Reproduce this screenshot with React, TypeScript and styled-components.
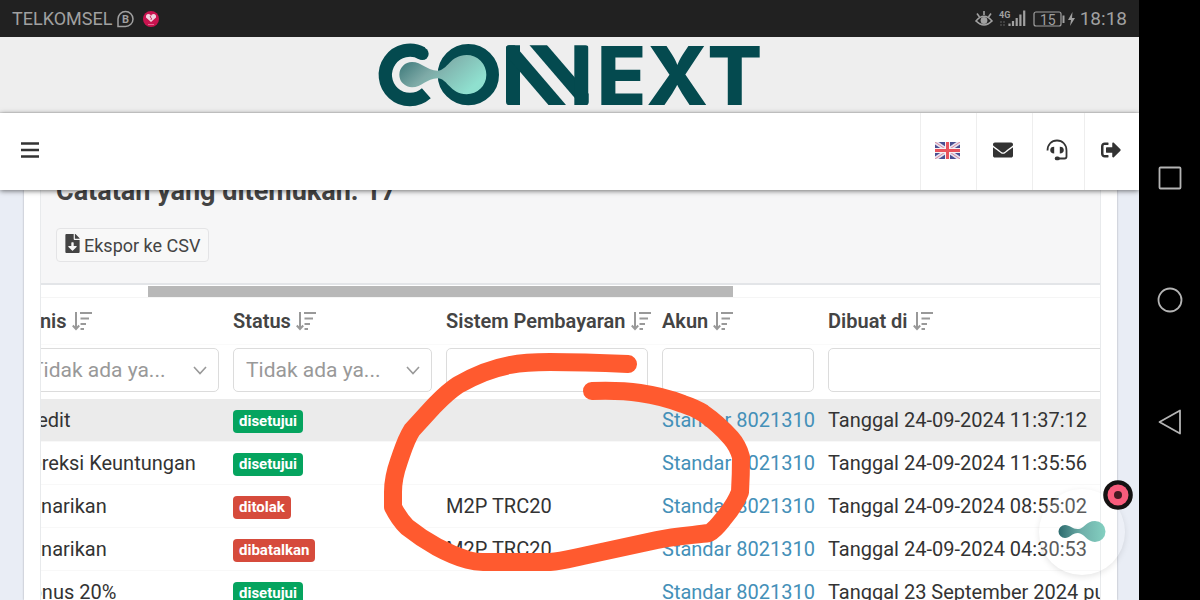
import React from "react";
import styled, { createGlobalStyle } from "styled-components";
import { FaSignOutAlt, FaFileDownload, FaEnvelope } from "react-icons/fa";

const GlobalStyle = createGlobalStyle`
  * { box-sizing: border-box; }
  body { margin: 0; background: #000; font-family: Roboto, "Liberation Sans", sans-serif; color: #333; }
  button, input, select { font-family: inherit; }
`;

const Device = styled.div`
  position: relative;
  display: flex;
  height: 100vh;
  overflow: hidden;
`;

const Screen = styled.div`
  flex: 1;
  min-width: 0;
  display: flex;
  flex-direction: column;
  background: #e9edf5;
  overflow: hidden;
`;

const StatusBar = styled.div`
  flex: none;
  display: flex;
  justify-content: space-between;
  align-items: center;
  height: 37px;
  padding: 0 12px;
  background: #212121;
  color: #a0a0a0;
  font-size: 19px;
`;

const StatusGroup = styled.div`
  display: flex;
  align-items: center;
  gap: 4px;
`;

const Carrier = styled.span`
  font-size: 18px;
`;

const LogoBar = styled.div`
  flex: none;
  display: flex;
  justify-content: center;
  height: 76px;
  background: #eeeeee;
  border-bottom: 1px solid #e0e0e0;
`;

const LogoMark = styled.svg`
  overflow: visible;
`;

const TopNav = styled.header`
  position: relative;
  z-index: 2;
  flex: none;
  display: flex;
  justify-content: space-between;
  height: 77px;
  background: #fff;
  box-shadow: 0 1px 5px rgba(0, 0, 0, 0.55);
`;

const NavActions = styled.nav`
  display: flex;
`;

const IconButton = styled.button<{ $w: number; $divided?: boolean }>`
  display: flex;
  align-items: center;
  justify-content: center;
  width: ${(p) => p.$w}px;
  padding: 0 3px 3px 0;
  border: 0;
  border-left: ${(p) => (p.$divided ? "1px solid #eeeeee" : "0")};
  background: none;
  color: #333;
`;

const Content = styled.main`
  flex: 1;
  min-height: 0;
  margin: 0 22px 0 24px;
  padding: 0 16px;
  background: #fff;
  box-shadow: 0 0 2px rgba(0, 0, 0, 0.3);
  overflow: hidden;
`;

const Panel = styled.section`
  border: solid #e8eaec;
  border-width: 0 1px;
`;

const PanelHead = styled.div`
  display: flow-root;
  height: 95px;
  padding: 0 15px;
  background: #f6f6f7;
  border-bottom: 2px solid #e3e5e8;
`;

const Heading = styled.h2`
  margin: -15px 0 20px;
  font-size: 27px;
  line-height: 33px;
  font-weight: 700;
  color: #444;
`;

const ExportButton = styled.button`
  display: flex;
  align-items: center;
  gap: 4px;
  height: 34px;
  padding: 0 8px;
  border: 1px solid #e4e4e6;
  border-radius: 4px;
  background: #f8f8f8;
  color: #444;
  font-size: 18px;

  svg {
    width: 15px;
    height: 19px;
    margin-bottom: 3px;
  }
`;

const ScrollTrack = styled.div`
  height: 12px;
  padding: 1px 0 0 10.1%;
`;

const ScrollThumb = styled.div`
  width: 61.4%;
  height: 11px;
  background: #b8b8b8;
`;

const TableClip = styled.div`
  overflow: hidden;
`;

const Table = styled.table`
  width: 1260px;
  margin-left: -30px;
  table-layout: fixed;
  border-collapse: separate;
  border-spacing: 0;
  font-size: 20px;
`;

const HeadCell = styled.th`
  height: 47px;
  padding: 0 7px;
  text-align: left;
  white-space: nowrap;
  font-size: 20px;
  font-weight: 600;
  color: #444;
  border-top: 1px solid #f5f5f5;
`;

const HeadLabel = styled.span`
  display: flex;
  align-items: center;
  gap: 5px;

  svg {
    flex: none;
  }
`;

const FilterCell = styled.td`
  height: 55px;
  padding: 3px 7px 7px 7px;
  border-top: 1px solid #fafafa;
`;

const Field = styled.input`
  display: block;
  width: 100%;
  height: 44px;
  padding: 0 12px;
  border: 1px solid #dcdcdc;
  border-radius: 5px;
  background: #fff;
  font-size: 20px;
`;

const SelectWrap = styled.div`
  position: relative;
`;

const Select = styled.select`
  display: block;
  width: 100%;
  height: 44px;
  padding: 0 12px;
  border: 1px solid #dcdcdc;
  border-radius: 5px;
  background: #fff;
  color: #999;
  font-size: 21px;
  appearance: none;
`;

const Chevron = styled.svg`
  position: absolute;
  right: 12px;
  top: 18px;
  pointer-events: none;
`;

const Row = styled.tr<{ $active?: boolean }>`
  background: ${(p) => (p.$active ? "#ebebeb" : "#fff")};
`;

const Cell = styled.td`
  height: 43px;
  padding: 0 7px;
  white-space: nowrap;
  border-bottom: 1px solid #f8f8f8;
`;

const AccountLink = styled.a`
  color: #4490b8;
  text-decoration: none;
`;

const Badge = styled.span<{ $tone: "ok" | "bad" }>`
  display: block;
  width: fit-content;
  height: 23px;
  margin-top: 3px;
  padding: 0 6px;
  border-radius: 4px;
  background: ${(p) => (p.$tone === "ok" ? "#05a45f" : "#d64b3c")};
  color: #fff;
  font-size: 15px;
  line-height: 23px;
  font-weight: 700;
`;

const SystemNav = styled.nav`
  flex: none;
  display: flex;
  flex-direction: column;
  align-items: center;
  justify-content: center;
  gap: 96px;
  width: 61px;
  background: #000;
`;

const SystemButton = styled.button`
  display: flex;
  padding: 0;
  border: 0;
  background: none;
`;

const Scribble = styled.svg`
  position: absolute;
  left: 0;
  top: 0;
  z-index: 3;
  pointer-events: none;
`;

const ChatBubble = styled.button`
  position: absolute;
  right: 75px;
  bottom: 25px;
  z-index: 4;
  display: flex;
  align-items: center;
  justify-content: center;
  width: 86px;
  height: 86px;
  padding: 0;
  border: 0;
  border-radius: 50%;
  background: rgba(255, 255, 255, 0.2);
  box-shadow: 0 2px 6px rgba(0, 0, 0, 0.1);
`;

const RecordDot = styled.button`
  position: absolute;
  right: 67px;
  top: 480px;
  z-index: 5;
  display: flex;
  padding: 0;
  border: 0;
  background: none;
`;

const SortIcon = () => (
  <svg width="20" height="20" viewBox="0 0 20 20" fill="none" stroke="#999" strokeWidth="2" aria-hidden="true">
    <path d="M4 1V18M0.8 14.5L4 18L7.2 14.5" />
    <path d="M8 2H20M8.500 7.500H17M8.500 13H14M8.500 18H12" />
  </svg>
);

const FlagIcon = () => (
  <svg width="25" height="17" viewBox="0 0 25 17" aria-hidden="true">
    <rect width="25" height="17" fill="#4a4f91" />
    <path d="M0 0L25 17M25 0L0 17" stroke="#e6e2f0" strokeWidth="4" />
    <path d="M0 0L25 17M25 0L0 17" stroke="#d98a9c" strokeWidth="1" />
    <path d="M12.5 0V17M0 8.5H25" stroke="#f7f0f3" strokeWidth="5" />
    <path d="M12.5 0V17M0 8.5H25" stroke="#e8525c" strokeWidth="3" />
  </svg>
);

const HeadsetIcon = () => (
  <svg width="22" height="22" viewBox="0 0 22 22" fill="none" aria-hidden="true">
    <path d="M1.5 11.5C1.5 5.5 5.5 1.5 11 1.5S20.5 5.5 20.5 11.5V17.5Q20.5 19.5 18.5 19.5H12" stroke="#333" strokeWidth="1.8" />
    <path d="M8.200 7.800V14.500C5.500 14.500 4.200 13.200 4.200 11.100S5.500 7.800 8.200 7.800ZM13.800 7.800V14.500C16.500 14.500 17.800 13.200 17.800 11.100S16.500 7.800 13.800 7.800Z" fill="#333" />
    <rect x="8.8" y="17.5" width="5" height="3.8" rx="1.9" fill="#333" />
  </svg>
);

const Logo = () => (
  <LogoMark width="400" height="75" viewBox="0 3 1200 225" role="img" aria-label="Connext">
    <defs>
      <linearGradient id="drop" x1="0" y1="0" x2="1" y2="0.5">
        <stop offset="0" stopColor="#2f6e70" />
        <stop offset="0.45" stopColor="#7eaaa7" />
        <stop offset="1" stopColor="#8fe0cf" />
      </linearGradient>
      <clipPath id="ligature">
        <rect x="408" y="28" width="248" height="179" rx="10" />
      </clipPath>
    </defs>
    <g fill="none" stroke="#044a4f" strokeWidth="40">
      <path d="M156 52A74 74 0 1 0 169 172" />
      <circle cx="295" cy="116" r="71" strokeWidth="42" />
    </g>
    <circle cx="157" cy="53" r="19" fill="#044a4f" />
    <path
      d="M126 78C155 78 170 103 203 104C233 103 240 57 290 57A59 59 0 0 1 290 175C240 175 233 128 203 127C170 128 155 154 126 154A38 38 0 0 1 126 78Z"
      fill="url(#drop)"
    />
    <g clipPath="url(#ligature)" stroke="#044a4f" strokeWidth="42">
      <line x1="429" y1="20" x2="429" y2="215" />
      <line x1="374" y1="-12" x2="596" y2="247" strokeWidth="40" />
      <line x1="471" y1="-12" x2="693" y2="247" strokeWidth="40" />
      <line x1="634" y1="20" x2="634" y2="215" />
    </g>
    <text y="206" textAnchor="middle" fontFamily="Inter, sans-serif" fontWeight="800" fontSize="244" fill="#044a4f">
      <tspan x="755">E</tspan>
      <tspan x="922">X</tspan>
      <tspan x="1094">T</tspan>
    </text>
  </LogoMark>
);

const filters: Array<"select" | "text"> = ["select", "select", "text", "text", "text"];
const columns = ["Jenis", "Status", "Sistem Pembayaran", "Akun", "Dibuat di"];
const widths = [215, 213, 216, 166, 450];

const rows: Array<{ kind: string; status: string; tone: "ok" | "bad"; system: string; date: string }> = [
  { kind: "Kredit", status: "disetujui", tone: "ok", system: "", date: "Tanggal 24-09-2024 11:37:12" },
  { kind: "Koreksi Keuntungan", status: "disetujui", tone: "ok", system: "", date: "Tanggal 24-09-2024 11:35:56" },
  { kind: "Penarikan", status: "ditolak", tone: "bad", system: "M2P TRC20", date: "Tanggal 24-09-2024 08:55:02" },
  { kind: "Penarikan", status: "dibatalkan", tone: "bad", system: "M2P TRC20", date: "Tanggal 24-09-2024 04:30:53" },
  { kind: "Bonus 20%", status: "disetujui", tone: "ok", system: "", date: "Tanggal 23 September 2024 pukul 20:14" },
];

const StatusIcons = () => (
  <svg width="101" height="20" viewBox="0 0 101 20" fill="none" aria-hidden="true">
    <g stroke="#a0a0a0" strokeWidth="1.6">
      <path d="M1 12Q9 2.500 17 12Q9 20 1 12Z" />
      <path d="M2 4.500L4.500 8M9 2V6M16 4.500L13.500 8" />
    </g>
    <circle cx="9" cy="11.500" r="3.400" fill="#a0a0a0" />
    <text x="24" y="9" fontSize="9" fontWeight="700" fill="#a0a0a0" fontFamily="Roboto, sans-serif">4G</text>
    <path d="M34.500 17V14.500M38 17V12M41.700 17V9M45.400 17V5.500M49.200 17V1.500" stroke="#a0a0a0" strokeWidth="2.200" />
    <path d="M26 12V17M29 12V17" stroke="#555" strokeWidth="1.200" strokeDasharray="2 1" />
    <rect x="59" y="3" width="27" height="14" rx="2" stroke="#a0a0a0" strokeWidth="1.200" />
    <path d="M88.500 6.500V14" stroke="#a0a0a0" strokeWidth="2" />
    <text x="65" y="15.500" fontSize="14" fill="#a0a0a0" fontFamily="Roboto, sans-serif">15</text>
    <path d="M97.500 3L93 11H96L95 17L100 9H97Z" fill="#a0a0a0" />
  </svg>
);

export default function App() {
  return (
    <Device>
      <GlobalStyle />
      <Screen>
        <StatusBar>
          <StatusGroup>
            <Carrier>TELKOMSEL</Carrier>
            <svg width="19" height="18" viewBox="-1 0 19 18" fill="none" aria-hidden="true">
              <path d="M1 16.500V9A7.500 7.500 0 1 1 8.500 16.500Z" stroke="#a0a0a0" strokeWidth="1.500" />
              <text x="5" y="13" fontSize="11" fontWeight="700" fill="#a0a0a0" fontFamily="Roboto, sans-serif">B</text>
            </svg>
            <svg width="24" height="18" viewBox="-3 0 24 18" aria-hidden="true">
              <circle cx="9" cy="9" r="8" fill="#c9134f" />
              <path d="M9 12L4 7.500Q3.500 4 6.500 4Q8.300 4 9 5.500Q9.700 4 11.500 4Q14.500 4 14 7.500Z" fill="#f0d3de" />
              <path d="M9 5.500L8 7L9.500 8L9 10" stroke="#c9134f" strokeWidth="0.800" fill="none" />
              <path d="M6 14.500H12" stroke="#e56a92" />
            </svg>
          </StatusGroup>
          <StatusGroup>
            <StatusIcons />
            <span>18:18</span>
          </StatusGroup>
        </StatusBar>
        <LogoBar>
          <Logo />
        </LogoBar>
        <TopNav>
          <IconButton $w={63} aria-label="Menu">
            <svg width="18" height="18" viewBox="0 0 18 18" aria-hidden="true">
              <path d="M0 2.500H18M0 9H18M0 15.500H18" stroke="#333" strokeWidth="2.600" />
            </svg>
          </IconButton>
          <NavActions>
            <IconButton $w={56} $divided aria-label="Bahasa"><FlagIcon /></IconButton>
            <IconButton $w={56} $divided aria-label="Pesan"><FaEnvelope size={20} /></IconButton>
            <IconButton $w={52} $divided aria-label="Bantuan"><HeadsetIcon /></IconButton>
            <IconButton $w={55} $divided aria-label="Keluar"><FaSignOutAlt size={20} /></IconButton>
          </NavActions>
        </TopNav>
        <Content>
          <Panel>
            <PanelHead>
              <Heading>Catatan yang ditemukan: 17</Heading>
              <ExportButton><FaFileDownload />Ekspor ke CSV</ExportButton>
            </PanelHead>
            <ScrollTrack><ScrollThumb /></ScrollTrack>
            <TableClip>
              <Table>
                <colgroup>
                  {widths.map((w, i) => <col key={i} width={w} />)}
                </colgroup>
                <thead>
                  <tr>
                    {columns.map((c) => (
                      <HeadCell key={c}><HeadLabel>{c}<SortIcon /></HeadLabel></HeadCell>
                    ))}
                  </tr>
                  <tr>
                    {filters.map((kind, i) => (
                      <FilterCell key={columns[i]}>
                        {kind === "select" ? (
                          <SelectWrap>
                            <Select aria-label={columns[i]}>
                              <option>Tidak ada ya...</option>
                            </Select>
                            <Chevron width="14" height="9" viewBox="0 0 14 9" fill="none" stroke="#999" strokeWidth="1.600">
                              <path d="M1 1L7 7.500L13 1" />
                            </Chevron>
                          </SelectWrap>
                        ) : (
                          <Field type="text" aria-label={columns[i]} />
                        )}
                      </FilterCell>
                    ))}
                  </tr>
                </thead>
                <tbody>
                  {rows.map((r, i) => (
                    <Row key={i} $active={i === 0}>
                      <Cell>{r.kind}</Cell>
                      <Cell><Badge $tone={r.tone}>{r.status}</Badge></Cell>
                      <Cell>{r.system}</Cell>
                      <Cell><AccountLink href="#">Standar 8021310</AccountLink></Cell>
                      <Cell>{r.date}</Cell>
                    </Row>
                  ))}
                </tbody>
              </Table>
            </TableClip>
          </Panel>
        </Content>
      </Screen>
      <SystemNav>
        <SystemButton aria-label="Recent apps">
          <svg width="26" height="26" viewBox="0 0 26 26" fill="none" stroke="#b4b4b4" strokeWidth="1.800">
            <rect x="2.500" y="2.500" width="21" height="21" rx="1" />
          </svg>
        </SystemButton>
        <SystemButton aria-label="Home">
          <svg width="26" height="26" viewBox="0 0 26 26" fill="none" stroke="#b4b4b4" strokeWidth="1.800">
            <circle cx="13" cy="13" r="11.500" />
          </svg>
        </SystemButton>
        <SystemButton aria-label="Back">
          <svg width="26" height="26" viewBox="0 0 26 26" fill="none" stroke="#b4b4b4" strokeWidth="1.800" strokeLinejoin="round">
            <path d="M2.500 13L23 1.500V24.500Z" />
          </svg>
        </SystemButton>
      </SystemNav>
      <Scribble width="800" height="600" viewBox="0 0 800 600" fill="none" aria-hidden="true">
        <path
          d="M628 364C605 363 575 362 550 362C532 362 520 363 510 365C488 369 470 378 458 385C446 393 440 400 433 407L412 430C405 441 402 453 399 461C394 475 393 485 393 492L393 507C397 515 402 522 407 527C417 535 426 541 437 547C448 553 458 557 468 560Q475 562 483 562L550 562C562 561 573 558 583 556L657 540C675 536 695 535 709 533C715 530 720 523 724 518Q735 505 740 492Q741 475 741 457Q738 446 731 438C724 430 713 420 703 413Q695 408 683 404Q662 396 640 393Q620 390 592 391"
          stroke="#ff5a2f"
          strokeWidth="18"
          strokeLinecap="round"
          strokeLinejoin="round"
        />
      </Scribble>
      <ChatBubble aria-label="Chat">
        <svg width="48" height="24" viewBox="0 0 48 24" aria-hidden="true">
          <defs>
            <linearGradient id="chat" x1="0" y1="0" x2="1" y2="0">
              <stop offset="0" stopColor="#2d6b6e" />
              <stop offset="0.5" stopColor="#6fb0aa" />
              <stop offset="1" stopColor="#84d0c1" />
            </linearGradient>
          </defs>
          <path
            d="M7 5C12 5 14 9 20 9C26 9 28 1 37 1A10.500 10.500 0 0 1 37 22C29 22 26 13 20 13C14 13 12 18 7 18A6.500 6.500 0 0 1 7 5Z"
            fill="url(#chat)"
          />
        </svg>
      </ChatBubble>
      <RecordDot aria-label="Record">
        <svg width="30" height="30" viewBox="0 0 30 30" aria-hidden="true">
          <circle cx="15" cy="15" r="14.800" fill="#151212" />
          <circle cx="15" cy="15" r="10.500" fill="#f95c7c" />
          <circle cx="15" cy="15" r="4" fill="#451a22" />
        </svg>
      </RecordDot>
    </Device>
  );
}
